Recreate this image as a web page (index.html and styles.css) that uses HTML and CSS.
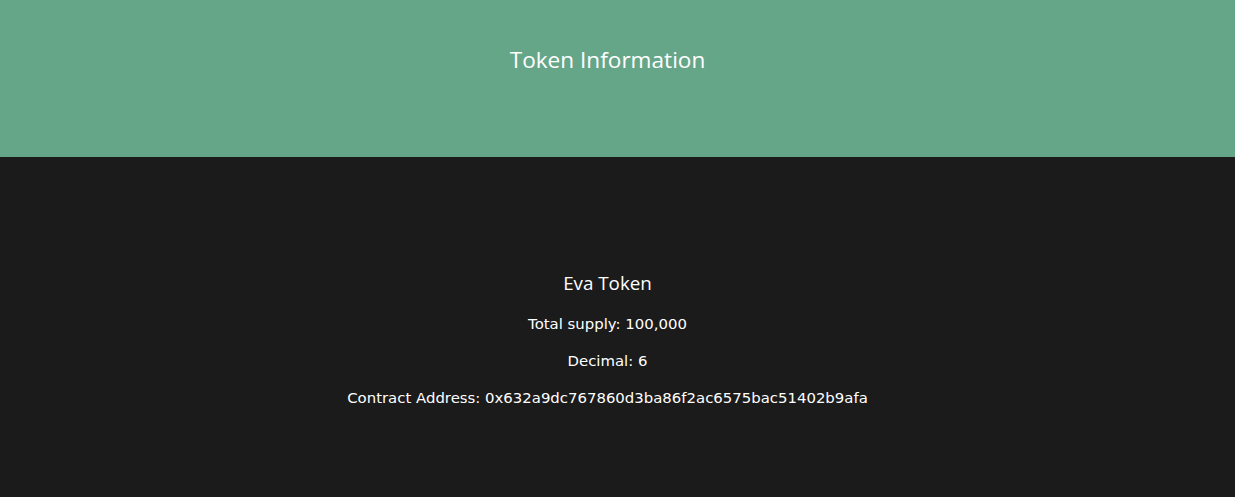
FILE: index.html
```html
<!DOCTYPE html>
<html>
<head>
<meta charset="utf-8">
<link rel="stylesheet" href="styles.css">
</head>
<body>
<header class="hero">
  <h1 class="hero-title">Token Information</h1>
</header>
<main class="info">
  <h2 class="token-name">Eva Token</h2>
  <p class="info-line">Total supply: 100,000</p>
  <p class="info-line">Decimal: 6</p>
  <p class="info-line">Contract Address: 0x632a9dc767860d3ba86f2ac6575bac51402b9afa</p>
</main>
</body>
</html>
```
FILE: styles.css
```css
html, body {
  margin: 0;
  padding: 0;
  background: #1b1b1b;
  height: 100%;
}
body {
  color: #fff;
  font-family: "DejaVu Sans", Verdana, sans-serif;
}
.hero {
  background: #65a689;
  height: 157px;
  padding-right: 20px;
  display: flex;
  justify-content: center;
}
.hero-title {
  margin: 0;
  padding-top: 44px;
  font-family: "Open Sans", "Noto Sans", sans-serif;
  font-weight: 400;
  font-size: 22.6px;
  line-height: 32px;
}
.info {
  padding-right: 20px;
  padding-top: 113px;
  display: flex;
  flex-direction: column;
  align-items: center;
}
.token-name {
  margin: 0 0 17px;
  font-family: "Open Sans", "Noto Sans", sans-serif;
  font-weight: 400;
  font-size: 18.8px;
  line-height: 26px;
}
.info-line {
  margin: 0 0 15px;
  font-size: 14.9px;
  line-height: 22px;
}
```
